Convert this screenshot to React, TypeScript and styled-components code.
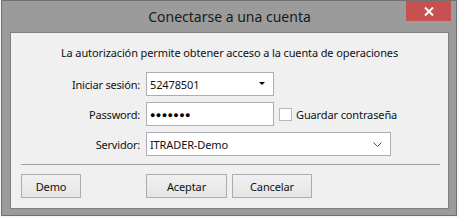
import React from "react";
import styled, { createGlobalStyle } from "styled-components";

const Global = createGlobalStyle`
  html, body { margin: 0; padding: 0; }
  body {
    width: 459px;
    height: 218px;
    overflow: hidden;
    background: #f7f7f7;
    font-family: "Noto Sans", "Liberation Sans", sans-serif;
  }
`;

const Window = styled.div`
  box-sizing: border-box;
  width: 456px;
  height: 216px;
  margin-left: 1px;
  border: 1px solid #717171;
  background: #9b9b9b;
  padding: 0 7px 6px 8px;
  display: flex;
  flex-direction: column;
  position: relative;
`;

const TitleBar = styled.div`
  height: 31px;
  display: flex;
  align-items: center;
  justify-content: center;
  font-size: 14px;
  color: #1a1a1a;
  padding-bottom: 1px;
  box-sizing: border-box;
`;

const CloseButton = styled.div`
  position: absolute;
  top: 0;
  right: 5px;
  width: 45px;
  height: 20px;
  background: #c75050;
  display: flex;
  align-items: center;
  justify-content: center;
`;

const Client = styled.div`
  flex: 1;
  border: 1px solid #7f7f7f;
  background: #f0f0f0;
  display: flex;
  flex-direction: column;
  font-size: 11px;
  letter-spacing: -0.12px;
  color: #111;
`;

const Info = styled.div`
  text-align: center;
  margin-top: 12px;
  height: 15px;
  line-height: 15px;
`;

const Form = styled.div`
  display: grid;
  grid-template-columns: 129px auto;
  column-gap: 6px;
  row-gap: 6px;
  margin-top: 12px;
`;

const Label = styled.div`
  text-align: right;
  align-self: center;
  letter-spacing: -0.2px;
`;

const FieldRow = styled.div`
  display: flex;
  align-items: center;
  gap: 5px;
`;

const Box = styled.div<{ $w: number }>`
  box-sizing: border-box;
  width: ${(p) => p.$w}px;
  height: 24px;
  border: 1px solid #abadb3;
  background: #fff;
  display: flex;
  align-items: center;
  padding: 0 8px 0 3px;
`;

const BoxText = styled.span`
  flex: 1;
`;

const Dots = styled.span`
  flex: 1;
  font-size: 9px;
  letter-spacing: 0.4px;
  color: #000;
`;

const Check = styled.div`
  box-sizing: border-box;
  width: 13px;
  height: 13px;
  border: 1px solid #b8b8b8;
  background: #fff;
`;

const CheckLabel = styled.span`
  margin-left: -1px;
`;

const Separator = styled.div`
  height: 1px;
  background: #a0a0a0;
  margin: 8px 8px 0 10px;
`;

const Buttons = styled.div`
  display: flex;
  margin: 9px 0 0 10px;
`;

const Button = styled.div<{ $w: number; $ml?: number }>`
  box-sizing: border-box;
  width: ${(p) => p.$w}px;
  height: 24px;
  margin-left: ${(p) => p.$ml ?? 0}px;
  border: 1px solid #acacac;
  background: linear-gradient(#f0f0f0, #e5e5e5);
  display: flex;
  align-items: center;
  justify-content: center;
  color: #111;
`;

export default function App() {
  return (
    <>
      <Global />
      <Window>
        <TitleBar>Conectarse a una cuenta</TitleBar>
        <CloseButton>
          <svg width="10" height="9" viewBox="0 0 10 9">
            <path d="M1 0.5 L9 8.5 M9 0.5 L1 8.5" stroke="#fff" strokeWidth="2" />
          </svg>
        </CloseButton>
        <Client>
          <Info>La autorización permite obtener acceso a la cuenta de operaciones</Info>
          <Form>
            <Label>Iniciar sesión:</Label>
            <FieldRow>
              <Box $w={128}>
                <BoxText>52478501</BoxText>
                <svg width="6" height="4" viewBox="0 0 6 4">
                  <path d="M0 0 H6 L3 3 Z" fill="#000" />
                </svg>
              </Box>
            </FieldRow>
            <Label>Password:</Label>
            <FieldRow>
              <Box $w={128}>
                <Dots>●●●●●●●</Dots>
              </Box>
              <Check />
              <CheckLabel>Guardar contraseña</CheckLabel>
            </FieldRow>
            <Label>Servidor:</Label>
            <FieldRow>
              <Box $w={245}>
                <BoxText>ITRADER-Demo</BoxText>
                <svg width="9" height="5" viewBox="0 0 9 5">
                  <path d="M0.5 0.5 L4.5 4.5 L8.5 0.5" stroke="#555" fill="none" />
                </svg>
              </Box>
            </FieldRow>
          </Form>
          <Separator />
          <Buttons>
            <Button $w={60}>Demo</Button>
            <Button $w={81} $ml={65}>Aceptar</Button>
            <Button $w={80} $ml={5}>Cancelar</Button>
          </Buttons>
        </Client>
      </Window>
    </>
  );
}
